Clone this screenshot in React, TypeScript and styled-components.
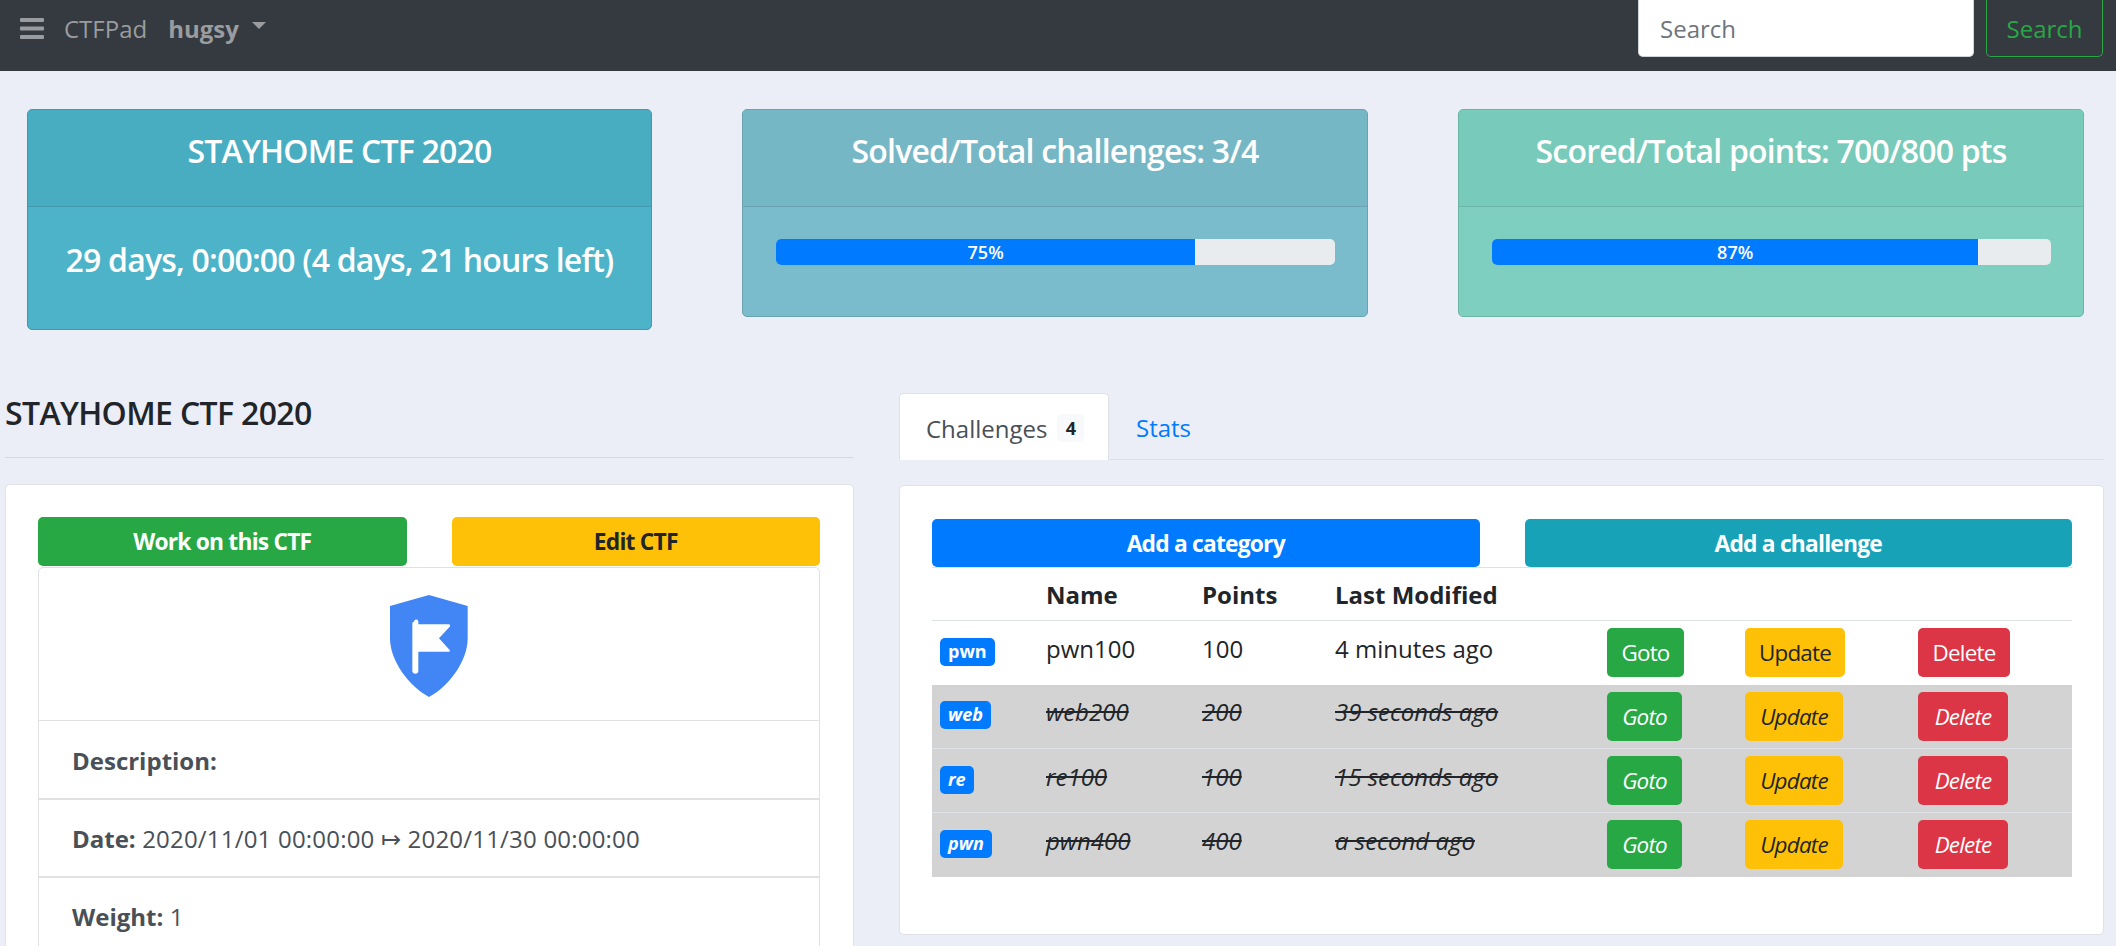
import React from "react";
import styled, { createGlobalStyle } from "styled-components";

const FONT = `"Open Sans", "Noto Sans", "Liberation Sans", sans-serif`;

const Global = createGlobalStyle`
  html, body { margin: 0; padding: 0; height: 946px; overflow: hidden; background: #ebeef6; }
  body { font-family: ${FONT}; font-size: 24px; color: #212529; }
  * { box-sizing: border-box; }
  button, input { font-family: inherit; }
`;

const Navbar = styled.nav`
  height: 71px;
  background: #343a40;
  display: flex;
  align-items: flex-start;
  justify-content: space-between;
  padding-right: 13px;
  color: #9a9c9f;
`;
const Brand = styled.div`
  display: flex;
  align-items: center;
  height: 57px;
  padding-left: 20px;
`;
const BrandName = styled.span`
  margin-left: 20px;
`;
const User = styled.span`
  margin-left: 21px;
  font-weight: 700;
`;
const Caret = styled.span`
  margin-left: 13px;
  margin-top: -6px;
  width: 0;
  height: 0;
  border-left: 7px solid transparent;
  border-right: 7px solid transparent;
  border-top: 7px solid #9a9c9f;
`;
const SearchForm = styled.form`
  display: flex;
  gap: 12px;
  margin: 0;
`;
const SearchInput = styled.input`
  width: 336px;
  height: 57px;
  border: 1px solid #ced4da;
  border-top: 0;
  border-radius: 0 0 5px 5px;
  background: #fff;
  padding: 0 21px;
  font-size: 24px;
  outline: none;
  &::placeholder { color: #6c757d; opacity: 1; }
`;
const SearchButton = styled.button`
  width: 117px;
  height: 57px;
  border: 1px solid #28a745;
  border-top: 0;
  border-radius: 0 0 5px 5px;
  background: transparent;
  color: #28a745;
  font-size: 24px;
  padding: 0;
`;

const Stats = styled.section`
  display: grid;
  grid-template-columns: 625px 626px 626px;
  column-gap: 90px;
  padding: 38px 0 0 27px;
  align-items: start;
`;
const StatCard = styled.div<{ $head: string; $body: string; $line: string }>`
  background: ${(p) => p.$body};
  border: 1px solid ${(p) => p.$line};
  border-radius: 5px;
  color: #fff;
  overflow: hidden;
  h4 {
    margin: 0;
    height: 97px;
    background: ${(p) => p.$head};
    border-bottom: 1px solid ${(p) => p.$line};
    display: flex;
    align-items: center;
    justify-content: center;
    padding-bottom: 16px;
    font-size: 32px;
    font-weight: 600;
    letter-spacing: -0.025em;
  }
`;
const TimeBody = styled.div`
  height: 122px;
  display: flex;
  align-items: center;
  justify-content: center;
  padding-bottom: 17px;
  font-size: 32px;
  font-weight: 600;
  letter-spacing: -0.025em;
`;
const ProgressBody = styled.div`
  height: 109px;
  padding: 32px 32px 0 33px;
`;
const Progress = styled.div`
  height: 26px;
  background: #e9ecef;
  border-radius: 5px;
  overflow: hidden;
`;
const ProgressFill = styled.div`
  height: 100%;
  background: #007bff;
  color: #fff;
  font-size: 18px;
  font-weight: 600;
  display: flex;
  align-items: center;
  justify-content: center;
`;

const Main = styled.main`
  display: grid;
  grid-template-columns: 849px 1205px;
  column-gap: 45px;
  padding: 63px 0 0 5px;
  align-items: start;
`;
const SectionTitle = styled.h4`
  margin: 0;
  height: 65px;
  border-bottom: 1px solid #d5d8de;
  padding-top: 1px;
  font-size: 32px;
  font-weight: 600;
  letter-spacing: -0.02em;
  line-height: 38px;
`;
const Panel = styled.div`
  background: #fff;
  border: 1px solid #e0e2e6;
  border-radius: 5px;
`;
const LeftPanel = styled(Panel)`
  margin-top: 26px;
  padding: 32px 33px 40px 32px;
`;
const ActionRow = styled.div`
  display: grid;
  grid-template-columns: 1fr 1fr;
  column-gap: 45px;
`;
const WideButton = styled.button<{ $bg: string; $fg: string; $h: number }>`
  height: ${(p) => p.$h}px;
  border: 0;
  border-radius: 5px;
  background: ${(p) => p.$bg};
  color: ${(p) => p.$fg};
  font-size: 22.8px;
  font-weight: 700;
  letter-spacing: -0.035em;
`;
const InfoList = styled.div`
  margin-top: 1px;
  border: 1px solid #dfe1e5;
  border-radius: 5px 5px 0 0;
`;
const LogoRow = styled.div`
  height: 152px;
  display: flex;
  justify-content: center;
  padding-top: 27px;
`;
const InfoRow = styled.div`
  height: 78px;
  border-top: 1px solid #dfe1e5;
  & + & { border-top: 2px solid #dfe1e5; }
  display: flex;
  align-items: center;
  padding: 1px 33px 0;
  color: #495057;
  white-space: pre;
  letter-spacing: 0.2px;
  b { font-weight: 700; letter-spacing: 0; }
`;

const Tabs = styled.div`
  display: flex;
  height: 67px;
  border-bottom: 1px solid #dfe1e5;
`;
const ActiveTab = styled.div`
  width: 210px;
  height: 67px;
  background: #fff;
  border: 1px solid #dfe1e5;
  border-bottom: 0;
  border-radius: 5px 5px 0 0;
  display: flex;
  align-items: center;
  padding: 2px 0 0 26px;
  color: #495057;
`;
const TabBadge = styled.span`
  margin-left: 10px;
  width: 27px;
  height: 28px;
  border-radius: 5px;
  background: #f8f9fa;
  color: #212529;
  font-size: 18px;
  font-weight: 700;
  display: flex;
  align-items: center;
  justify-content: center;
`;
const Tab = styled.div`
  height: 67px;
  display: flex;
  align-items: center;
  padding: 2px 0 0 27px;
  color: #007bff;
`;
const RightPanel = styled(Panel)`
  margin-top: 25px;
  height: 450px;
  width: 1205px;
  padding: 33px 31px 32px 32px;
`;
const Table = styled.table`
  width: 1140px;
  table-layout: fixed;
  border-collapse: collapse;
  border-top: 1px solid #dee2e6;
`;
const HeadCell = styled.th`
  height: 53px;
  padding: 0 16px;
  text-align: left;
  font-weight: 700;
  border-bottom: 1px solid #dee2e6;
  white-space: nowrap;
`;
const Row = styled.tr<{ $done?: boolean }>`
  height: 64px;
  background: ${(p) => (p.$done ? "#d3d3d3" : "#fff")};
  font-style: ${(p) => (p.$done ? "italic" : "normal")};
  text-decoration: ${(p) => (p.$done ? "line-through" : "none")};
  & + & td { border-top: 1px solid #dee2e6; }
`;
const Cell = styled.td`
  padding: 0 16px 9px;
  white-space: nowrap;
`;
const ActionCell = styled.td`
  padding: 0 16px;
  line-height: 0;
`;
const BadgeCell = styled.td`
  padding: 0 8px 8px;
`;
const CategoryBadge = styled.span`
  display: inline-block;
  padding: 0 8px;
  height: 28px;
  line-height: 27px;
  border-radius: 5px;
  background: #007bff;
  color: #fff;
  font-size: 18px;
  font-weight: 700;
  text-decoration: none;
`;
const RowButton = styled.button<{ $bg: string; $fg: string; $w: number }>`
  display: inline-block;
  vertical-align: middle;
  width: ${(p) => p.$w}px;
  height: 49px;
  padding: 0;
  border: 0;
  border-radius: 5px;
  background: ${(p) => p.$bg};
  color: ${(p) => p.$fg};
  font-size: 22.4px;
  line-height: normal;
  letter-spacing: -0.035em;
  font-style: inherit;
`;

const Bars = () => (
  <svg width="24" height="21" viewBox="0 0 24 21" fill="#9a9c9f">
    <rect y="0" width="24" height="4" rx="1" />
    <rect y="8.5" width="24" height="4" rx="1" />
    <rect y="17" width="24" height="4" rx="1" />
  </svg>
);

const Shield = () => (
  <svg width="78" height="102" viewBox="0 0 234 306">
    <path d="M117 0L233 33V130C233 200 175 275 117 306C59 275 0 200 0 130V33Z" fill="#4285f4" />
    <path
      d="M72 80a5 5 0 0 1 13 0v8h91a4 4 0 0 1 3 7l-32 35 32 35a3 3 0 0 1-2 5H85v57a6.500 6.500 0 0 1-18 0V85a5 5 0 0 1 5-5Z"
      fill="#fff"
    />
  </svg>
);

const rows = [
  { cat: "pwn", name: "pwn100", pts: "100", time: "4 minutes ago", done: false },
  { cat: "web", name: "web200", pts: "200", time: "39 seconds ago", done: true },
  { cat: "re", name: "re100", pts: "100", time: "15 seconds ago", done: true },
  { cat: "pwn", name: "pwn400", pts: "400", time: "a second ago", done: true },
];

export default function App() {
  return (
    <>
      <Global />
      <Navbar>
        <Brand>
          <Bars />
          <BrandName>CTFPad</BrandName>
          <User>hugsy</User>
          <Caret />
        </Brand>
        <SearchForm>
          <SearchInput placeholder="Search" />
          <SearchButton type="button">Search</SearchButton>
        </SearchForm>
      </Navbar>

      <Stats>
        <StatCard $head="#49adc1" $body="#4cb3c8" $line="#4199ab">
          <h4>STAYHOME CTF 2020</h4>
          <TimeBody>29 days, 0:00:00 (4 days, 21 hours left)</TimeBody>
        </StatCard>
        <StatCard $head="#76b7c5" $body="#7abccb" $line="#69a3b0">
          <h4>Solved/Total challenges: 3/4</h4>
          <ProgressBody>
            <Progress>
              <ProgressFill style={{ width: "75%" }}>75%</ProgressFill>
            </Progress>
          </ProgressBody>
        </StatCard>
        <StatCard $head="#78cabb" $body="#7fcfc0" $line="#6bb5a7">
          <h4>Scored/Total points: 700/800 pts</h4>
          <ProgressBody>
            <Progress>
              <ProgressFill style={{ width: "87%" }}>87%</ProgressFill>
            </Progress>
          </ProgressBody>
        </StatCard>
      </Stats>

      <Main>
        <div>
          <SectionTitle>STAYHOME CTF 2020</SectionTitle>
          <LeftPanel>
            <ActionRow>
              <WideButton $h={49} $bg="#28a745" $fg="#fff">Work on this CTF</WideButton>
              <WideButton $h={49} $bg="#ffc107" $fg="#212529">Edit CTF</WideButton>
            </ActionRow>
            <InfoList>
              <LogoRow>
                <Shield />
              </LogoRow>
              <InfoRow>
                <b>Description:</b>
              </InfoRow>
              <InfoRow>
                <b>Date:</b> 2020/11/01 00:00:00 ↦ 2020/11/30 00:00:00
              </InfoRow>
              <InfoRow>
                <b>Weight:</b> 1
              </InfoRow>
            </InfoList>
          </LeftPanel>
        </div>
        <div>
          <Tabs>
            <ActiveTab>
              Challenges<TabBadge>4</TabBadge>
            </ActiveTab>
            <Tab>Stats</Tab>
          </Tabs>
          <RightPanel>
            <ActionRow>
              <WideButton $h={48} $bg="#007bff" $fg="#fff">Add a category</WideButton>
              <WideButton $h={48} $bg="#17a2b8" $fg="#fff">Add a challenge</WideButton>
            </ActionRow>
            <Table>
              <colgroup>
                <col width="98" />
                <col width="156" />
                <col width="133" />
                <col width="272" />
                <col width="138" />
                <col width="173" />
                <col width="170" />
              </colgroup>
              <thead>
                <tr>
                  <HeadCell />
                  <HeadCell>Name</HeadCell>
                  <HeadCell>Points</HeadCell>
                  <HeadCell colSpan={4}>Last Modified</HeadCell>
                </tr>
              </thead>
              <tbody>
                {rows.map((r) => (
                  <Row key={r.name} $done={r.done}>
                    <BadgeCell>
                      <CategoryBadge>{r.cat}</CategoryBadge>
                    </BadgeCell>
                    <Cell>{r.name}</Cell>
                    <Cell>{r.pts}</Cell>
                    <Cell>{r.time}</Cell>
                    <ActionCell>
                      <RowButton $bg="#28a745" $fg="#fff" $w={r.done ? 75 : 77}>Goto</RowButton>
                    </ActionCell>
                    <ActionCell>
                      <RowButton $bg="#ffc107" $fg="#212529" $w={r.done ? 98 : 100}>Update</RowButton>
                    </ActionCell>
                    <ActionCell>
                      <RowButton $bg="#dc3545" $fg="#fff" $w={r.done ? 90 : 92}>Delete</RowButton>
                    </ActionCell>
                  </Row>
                ))}
              </tbody>
            </Table>
          </RightPanel>
        </div>
      </Main>
    </>
  );
}
